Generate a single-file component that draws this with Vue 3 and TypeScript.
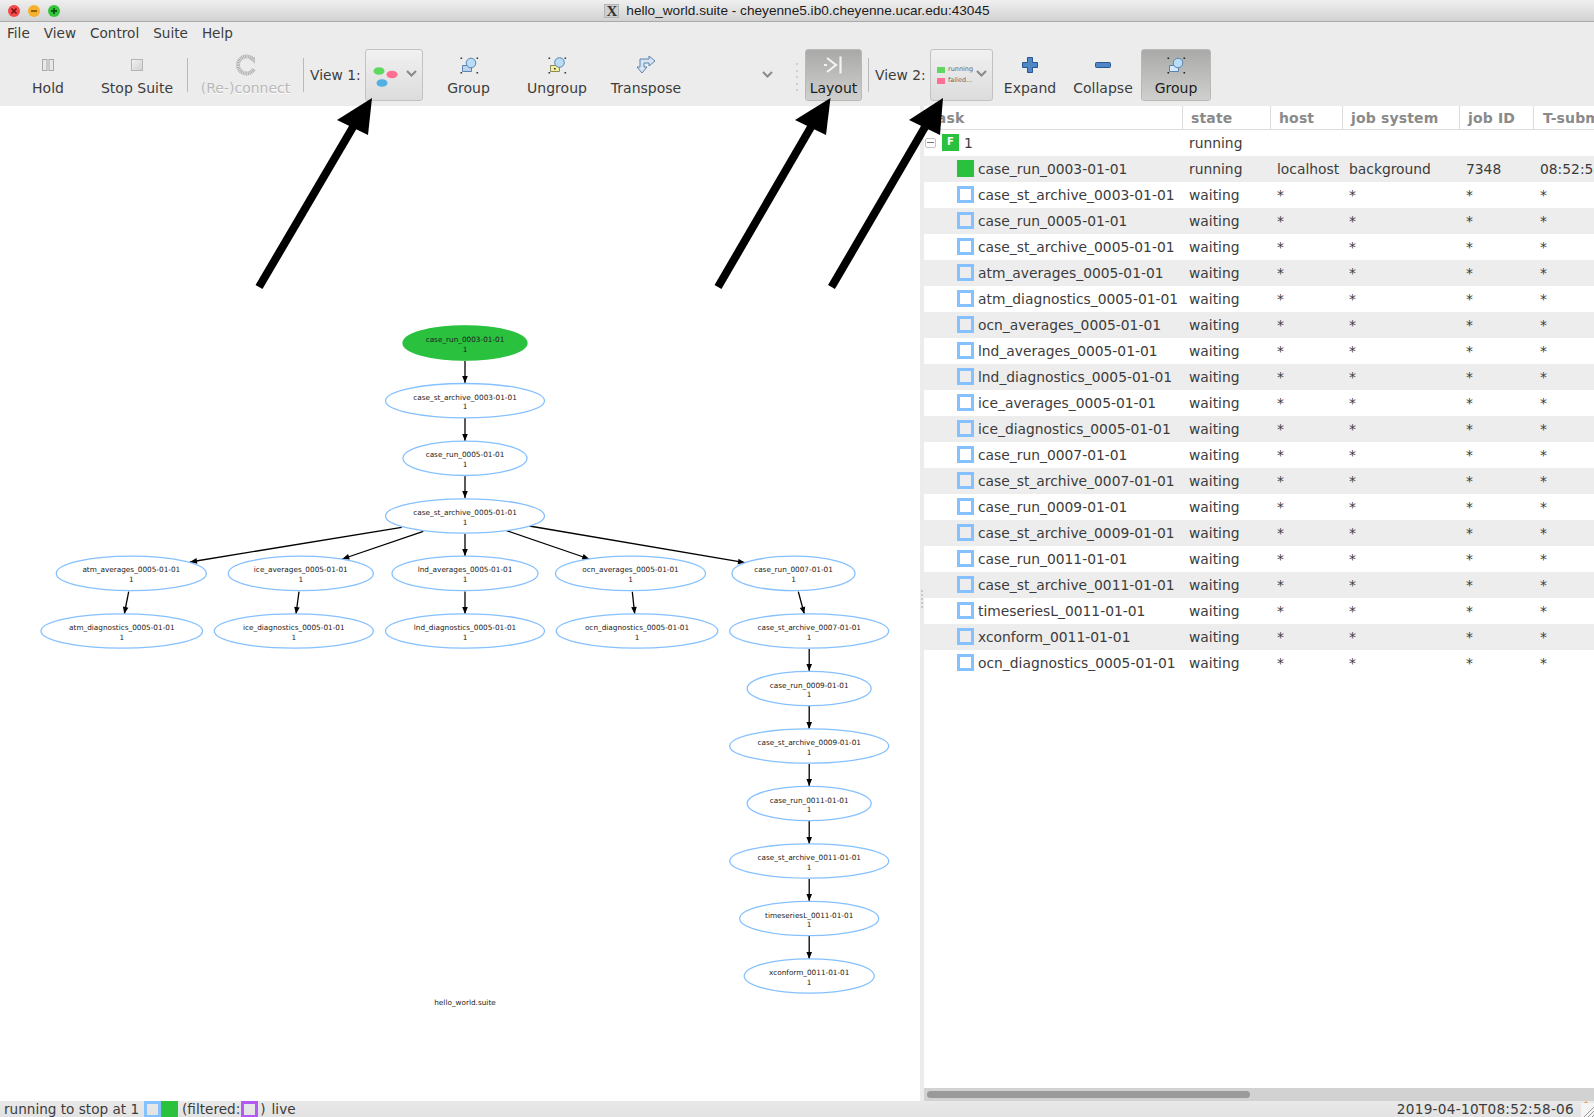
<template>
  <div class="window">
    <div class="titlebar">
      <div class="lights">
        <span class="light red"><svg width="8" height="8" viewBox="0 0 8 8"><path d="M1.5 1.5l5 5M6.5 1.5l-5 5" stroke="#7a1010" stroke-width="1.6" /></svg></span>
        <span class="light amber"><svg width="8" height="8" viewBox="0 0 8 8"><path d="M1 4h6" stroke="#8a5a08" stroke-width="1.8" /></svg></span>
        <span class="light green"><svg width="8" height="8" viewBox="0 0 8 8"><path d="M1 4h6M4 1v6" stroke="#0b5a12" stroke-width="1.8" /></svg></span>
      </div>
      <div class="title">
        <span class="x-logo">X</span>
        <span>hello_world.suite - cheyenne5.ib0.cheyenne.ucar.edu:43045</span>
      </div>
    </div>

    <div class="menubar">
      <span v-for="m in menus" :key="m">{{ m }}</span>
    </div>

    <div class="toolbar">
      <div class="tool w-hold">
        <svg class="ico" width="24" height="24" viewBox="0 0 24 24">
          <rect x="6.5" y="6.5" width="4.5" height="11" fill="#e8e8e8" stroke="#a9a9a9" />
          <rect x="13" y="6.5" width="4.5" height="11" fill="#e8e8e8" stroke="#a9a9a9" />
        </svg>
        <span>Hold</span>
      </div>
      <div class="tool w-stop">
        <svg class="ico" width="24" height="24" viewBox="0 0 24 24">
          <defs>
            <linearGradient id="stopfill" x1="0" y1="0" x2="1" y2="1">
              <stop offset="0" stop-color="#f4f4f4" />
              <stop offset="1" stop-color="#cfcfcf" />
            </linearGradient>
          </defs>
          <rect x="6.5" y="6.5" width="11" height="11" fill="url(#stopfill)" stroke="#b5b5b5" />
        </svg>
        <span>Stop Suite</span>
      </div>
      <i class="sep sep-a"></i>
      <div class="tool w-conn disabled">
        <svg class="ico" width="24" height="24" viewBox="0 0 24 24">
          <path d="M19 6.5 A8.5 8.5 0 1 0 20 16" fill="none" stroke="#adadad" stroke-width="4" stroke-dasharray="1 0.6" />
          <path d="M14 4h7v7z" fill="#c2c2c2" />
        </svg>
        <span>(Re-)connect</span>
      </div>
      <i class="sep"></i>
      <span class="view-label vl-one">View 1:</span>
      <div class="combo combo-one">
        <svg width="30" height="30" viewBox="0 0 30 30">
          <ellipse cx="9" cy="11" rx="5.5" ry="3.8" fill="#5fd85f" />
          <ellipse cx="22" cy="14.5" rx="5.5" ry="3.8" fill="#ff6f94" />
          <ellipse cx="12" cy="23" rx="5.5" ry="3.8" fill="#50b0e0" />
        </svg>
        <svg class="chev" width="11" height="7" viewBox="0 0 11 7"><path d="M1 1l4.5 4.5L10 1" fill="none" stroke="#8a8a8a" stroke-width="2" /></svg>
      </div>
      <div class="tool w-group">
        <svg class="ico" width="24" height="24" viewBox="0 0 24 24">
          <path d="M5.5 12.5h9v6h-9z" fill="#b9d4ee" stroke="#5b83ad" />
          <circle cx="14" cy="10" r="4.8" fill="#b9dcf7" stroke="#5b83ad" />
          <path d="M3.5 4.5h1.6v1.6H3.5zM19.5 4.5h1.6v1.6h-1.6zM3.5 19h1.6v1.6H3.5zM19.5 19h1.6v1.6h-1.6z" fill="#333" />
        </svg>
        <span>Group</span>
      </div>
      <div class="tool w-ungroup">
        <svg class="ico" width="24" height="24" viewBox="0 0 24 24">
          <path d="M5.5 12.5h9v6h-9z" fill="#f2ef9a" stroke="#8b8b5b" />
          <circle cx="14.5" cy="9.5" r="4.8" fill="#b9dcf7" stroke="#5b83ad" />
          <path d="M3.5 4.5h1.6v1.6H3.5zM19.5 4.5h1.6v1.6h-1.6zM3.5 19h1.6v1.6H3.5zM19.5 19h1.6v1.6h-1.6zM9 15h1.6v1.6H9z" fill="#333" />
        </svg>
        <span>Ungroup</span>
      </div>
      <div class="tool w-transpose">
        <svg class="ico" width="24" height="24" viewBox="0 0 24 24">
          <path d="M3 14h3V6h9V3l6 5-6 5v-3H10v4h3l-5 6z" fill="#d7e5f3" stroke="#5b83ad" stroke-linejoin="round" />
        </svg>
        <span>Transpose</span>
      </div>
      <svg class="more" width="11" height="7" viewBox="0 0 11 7"><path d="M1 1l4.5 4.5L10 1" fill="none" stroke="#8a8a8a" stroke-width="2" /></svg>
      <div class="grip"><i v-for="n in 5" :key="n"></i></div>
      <div class="tool toggled w-layout">
        <svg class="ico" width="24" height="24" viewBox="0 0 24 24">
          <path d="M5 5l9 7-9 7" fill="none" stroke="#f3f3f1" stroke-width="2.2" />
          <path d="M18.5 3.5v17" stroke="#f3f3f1" stroke-width="2.2" />
          <path d="M2 11h3v2H2z" fill="#f3f3f1" />
        </svg>
        <span>Layout</span>
      </div>
      <i class="sep sep-b"></i>
      <span class="view-label vl-two">View 2:</span>
      <div class="combo combo-two">
        <div class="legend">
          <div><b class="sw-run"></b>running</div>
          <div><b class="sw-fail"></b>failed...</div>
        </div>
        <svg class="chev" width="11" height="7" viewBox="0 0 11 7"><path d="M1 1l4.5 4.5L10 1" fill="none" stroke="#8a8a8a" stroke-width="2" /></svg>
      </div>
      <div class="tool w-expand">
        <svg class="ico" width="24" height="24" viewBox="0 0 24 24">
          <path d="M9.5 4.5h5v5h5v5h-5v5h-5v-5h-5v-5h5z" fill="#4f86c6" stroke="#2a5590" />
        </svg>
        <span>Expand</span>
      </div>
      <div class="tool w-collapse">
        <svg class="ico" width="24" height="24" viewBox="0 0 24 24">
          <rect x="4.5" y="9.5" width="15" height="5" rx="1" fill="#4f86c6" stroke="#2a5590" />
        </svg>
        <span>Collapse</span>
      </div>
      <div class="tool toggled w-group2">
        <svg class="ico" width="24" height="24" viewBox="0 0 24 24">
          <path d="M5.5 12.5h9v6h-9z" fill="#d4e8fa" stroke="#5b83ad" />
          <circle cx="14" cy="10" r="4.8" fill="#b9dcf7" stroke="#5b83ad" />
          <path d="M3.5 4.5h1.6v1.6H3.5zM19.5 4.5h1.6v1.6h-1.6zM3.5 19h1.6v1.6H3.5zM19.5 19h1.6v1.6h-1.6z" fill="#222" />
        </svg>
        <span>Group</span>
      </div>
    </div>

    <div class="panes">
      <div class="graph-pane">
        <svg class="graph" width="920" height="995" viewBox="0 106 920 995">
          <g v-for="(e, i) in edges" :key="'e' + i">
            <line :x1="e.x1" :y1="e.y1" :x2="e.x2" :y2="e.y2" stroke="#000" stroke-width="1.3" />
            <polygon :points="head(e)" fill="#000" />
          </g>
          <g v-for="n in nodes" :key="n.label">
            <ellipse :cx="n.x" :cy="n.y" :rx="n.rx" ry="17.2"
              :fill="n.running ? '#2ac13f' : '#fff'" :stroke="n.running ? '#2ac13f' : '#85c0ff'" stroke-width="1.3" />
            <text class="node-text" :x="n.x" :y="n.y - 1">{{ n.label }}</text>
            <text class="node-text" :x="n.x" :y="n.y + 8.5">1</text>
          </g>
          <text class="node-text" x="465" y="1005">hello_world.suite</text>
        </svg>
      </div>

      <div class="divider"><i v-for="n in 5" :key="n"></i></div>

      <div class="table-pane">
        <div class="thead">
          <div v-for="h in headers" :key="h">{{ h }}</div>
        </div>
        <div class="row">
          <div class="c-task group-cell">
            <span class="minus"></span>
            <span class="family">F</span>
            <span>1</span>
          </div>
          <div>running</div>
        </div>
        <div v-for="(t, i) in tasks" :key="t.name + i" class="row" :class="{ stripe: i % 2 === 0 }">
          <div class="c-task task-cell">
            <span class="state" :class="{ run: t.state === 'running' }"></span>
            <span>{{ t.name }}</span>
          </div>
          <div>{{ t.state }}</div>
          <div>{{ t.host }}</div>
          <div>{{ t.system }}</div>
          <div>{{ t.id }}</div>
          <div>{{ t.submit }}</div>
        </div>
        <div class="hscroll"><div class="thumb"></div></div>
      </div>
    </div>

    <div class="statusbar">
      <span>running to stop at 1</span>
      <span class="state st-first"></span>
      <span class="state run"></span>
      <span class="st-filter">(filtered:</span>
      <span class="state filtered"></span>
      <span class="st-close">)</span>
      <span class="st-live">live</span>
      <span class="st-time">2019-04-10T08:52:58-06</span>
      <svg class="resize" width="13" height="16" viewBox="0 0 13 16">
        <rect x="0" y="2" width="13" height="14" fill="#f4f4f4" />
        <path d="M3 16L13 6M7 16l6-6M11 16l2-2" stroke="#9a9a9a" fill="none" />
        <path d="M3 2l2-2 2 2z" fill="#f0a050" />
      </svg>
    </div>

    <svg class="callouts" width="1594" height="300" viewBox="0 0 1594 300">
      <g v-for="(a, i) in callouts" :key="i">
        <line :x1="a.tail[0]" :y1="a.tail[1]" :x2="a.neck[0]" :y2="a.neck[1]" stroke="#000" stroke-width="8" />
        <polygon :points="a.head" fill="#000" />
      </g>
    </svg>
  </div>
</template>

<script setup lang="ts">
interface Edge { x1: number; y1: number; x2: number; y2: number }
interface GraphNode { label: string; x: number; y: number; rx: number; running?: boolean }
interface Task { name: string; state: string; host: string; system: string; id: string; submit: string }

const menus = ['File', 'View', 'Control', 'Suite', 'Help']
const headers = ['task', 'state', 'host', 'job system', 'job ID', 'T-submit']

const cx = 465
const cr = 809.2
const nodes: GraphNode[] = [
  { label: 'case_run_0003-01-01', x: cx, y: 343, rx: 62, running: true },
  { label: 'case_st_archive_0003-01-01', x: cx, y: 400.7, rx: 79.5 },
  { label: 'case_run_0005-01-01', x: cx, y: 458.3, rx: 62 },
  { label: 'case_st_archive_0005-01-01', x: cx, y: 516, rx: 79.5 },
  { label: 'atm_averages_0005-01-01', x: 131.3, y: 573.4, rx: 75 },
  { label: 'ice_averages_0005-01-01', x: 300.8, y: 573.4, rx: 72.5 },
  { label: 'lnd_averages_0005-01-01', x: cx, y: 573.4, rx: 73 },
  { label: 'ocn_averages_0005-01-01', x: 630.5, y: 573.4, rx: 75 },
  { label: 'case_run_0007-01-01', x: 793.5, y: 573.4, rx: 61.5 },
  { label: 'atm_diagnostics_0005-01-01', x: 121.8, y: 631, rx: 80.8 },
  { label: 'ice_diagnostics_0005-01-01', x: 293.8, y: 631, rx: 79.5 },
  { label: 'lnd_diagnostics_0005-01-01', x: cx, y: 631, rx: 79.5 },
  { label: 'ocn_diagnostics_0005-01-01', x: 637, y: 631, rx: 80.8 },
  { label: 'case_st_archive_0007-01-01', x: cr, y: 631, rx: 79.5 },
  { label: 'case_run_0009-01-01', x: cr, y: 688.5, rx: 62 },
  { label: 'case_st_archive_0009-01-01', x: cr, y: 746, rx: 79.5 },
  { label: 'case_run_0011-01-01', x: cr, y: 803.5, rx: 62 },
  { label: 'case_st_archive_0011-01-01', x: cr, y: 861, rx: 79.5 },
  { label: 'timeseriesL_0011-01-01', x: cr, y: 918.5, rx: 69.5 },
  { label: 'xconform_0011-01-01', x: cr, y: 976, rx: 65 },
]

function vert(x: number, y1: number, y2: number): Edge {
  return { x1: x, y1, x2: x, y2 }
}

const edges: Edge[] = [
  vert(cx, 361, 383), vert(cx, 418, 441), vert(cx, 476, 498),
  { x1: 401.7, y1: 527.3, x2: 190, y2: 562 },
  { x1: 423.3, y1: 531.3, x2: 342.3, y2: 559 },
  vert(cx, 534, 556),
  { x1: 506.7, y1: 530.7, x2: 589.3, y2: 559 },
  { x1: 529.3, y1: 526, x2: 745, y2: 562.7 },
  { x1: 128.7, y1: 591.7, x2: 124.3, y2: 614 },
  { x1: 299, y1: 591.7, x2: 296, y2: 614 },
  vert(cx, 591.5, 614),
  { x1: 632.3, y1: 591.7, x2: 634.7, y2: 614 },
  { x1: 798.3, y1: 591.7, x2: 804.3, y2: 614 },
  vert(cr, 649, 671), vert(cr, 706, 729), vert(cr, 764, 786),
  vert(cr, 821, 844), vert(cr, 879, 901), vert(cr, 936, 959),
]

// arrowhead at the end of a graph edge
function head(e: Edge): string {
  const dx = e.x2 - e.x1
  const dy = e.y2 - e.y1
  const len = Math.hypot(dx, dy)
  const ux = dx / len
  const uy = dy / len
  const bx = e.x2 - ux * 7
  const by = e.y2 - uy * 7
  return `${e.x2},${e.y2} ${bx - uy * 2.8},${by + ux * 2.8} ${bx + uy * 2.8},${by - ux * 2.8}`
}

const callouts = [
  { tail: [259, 287], neck: [353, 127], head: '372,98 368,135 337,120' },
  { tail: [718, 287], neck: [811, 127], head: '830.5,98 826,135 795,120' },
  { tail: [831.5, 287], neck: [925, 127], head: '943,98 940,135 909,120' },
]

const waiting = [
  'case_st_archive_0003-01-01', 'case_run_0005-01-01', 'case_st_archive_0005-01-01',
  'atm_averages_0005-01-01', 'atm_diagnostics_0005-01-01', 'ocn_averages_0005-01-01',
  'lnd_averages_0005-01-01', 'lnd_diagnostics_0005-01-01', 'ice_averages_0005-01-01',
  'ice_diagnostics_0005-01-01', 'case_run_0007-01-01', 'case_st_archive_0007-01-01',
  'case_run_0009-01-01', 'case_st_archive_0009-01-01', 'case_run_0011-01-01',
  'case_st_archive_0011-01-01', 'timeseriesL_0011-01-01', 'xconform_0011-01-01',
  'ocn_diagnostics_0005-01-01',
]

const tasks: Task[] = [
  { name: 'case_run_0003-01-01', state: 'running', host: 'localhost', system: 'background', id: '7348', submit: '08:52:58' },
  ...waiting.map((name) => ({ name, state: 'waiting', host: '*', system: '*', id: '*', submit: '*' })),
]
</script>

<style>
html, body { margin: 0; overflow: hidden; background: #fff; }
</style>

<style scoped>
.window {
  position: relative;
  width: 1594px;
  height: 1117px;
  display: flex;
  flex-direction: column;
  overflow: hidden;
  font-family: "DejaVu Sans", sans-serif;
  font-size: 14px;
  color: #3c3c3c;
  background: #ececec;
}

.titlebar {
  height: 21px;
  flex: none;
  display: flex;
  align-items: center;
  justify-content: center;
  position: relative;
  background: linear-gradient(#efefef, #d2d2d2);
  border-bottom: 1px solid #a9a9a9;
}
.lights {
  position: absolute;
  left: 8px;
  top: 5px;
  display: flex;
  gap: 8px;
}
.light {
  width: 12px;
  height: 12px;
  border-radius: 50%;
  display: flex;
  align-items: center;
  justify-content: center;
}
.red { background: #f4494a; }
.amber { background: #f7b02d; }
.green { background: #31c43c; }
.title {
  display: flex;
  align-items: center;
  gap: 7px;
  font-family: "Liberation Sans", sans-serif;
  font-size: 13.65px;
  color: #1c1c1c;
}
.x-logo {
  width: 15px;
  height: 14px;
  background: #cfcfcf;
  border: 1px solid #b5b5b5;
  box-sizing: border-box;
  font: bold 15px/12px "Liberation Serif", serif;
  text-align: center;
  color: #333;
}

.menubar {
  height: 22px;
  flex: none;
  display: flex;
  align-items: center;
  gap: 14px;
  padding-left: 7px;
  font-size: 13.6px;
}

.toolbar {
  height: 62px;
  flex: none;
  box-sizing: border-box;
  padding: 5px 0 4px;
  display: flex;
  align-items: stretch;
}
.tool {
  height: 52px;
  box-sizing: border-box;
  flex: none;
  display: flex;
  flex-direction: column;
  align-items: center;
  padding-top: 4px;
  gap: 3px;
  white-space: nowrap;
}
.ico { flex: none; }
.w-hold { width: 96px; }
.w-stop { width: 82px; }
.w-conn { width: 115px; }
.w-group { width: 91px; }
.w-ungroup { width: 86px; }
.w-transpose { width: 92px; }
.w-layout { width: 57px; }
.w-expand { width: 74px; }
.w-collapse { width: 72px; }
.w-group2 { width: 70px; margin-left: 2px; }
.disabled { color: #b8b8b8; text-shadow: 0 1px 0 #fff; }
.toggled {
  background: linear-gradient(#a9aaa7, #d0d1cf);
  border: 1px solid #b9b9b9;
  border-radius: 3px;
  color: #1c1c1c;
  padding-top: 3px;
}

.sep {
  flex: none;
  width: 1px;
  height: 34px;
  margin-top: 9px;
  background: #b9b9b9;
}
.sep-a { margin-left: 9px; }
.sep-b { margin-left: 6px; }
.view-label { flex: none; line-height: 52px; font-size: 13.8px; }
.vl-one { margin-left: 6px; width: 55px; }
.vl-two { margin-left: 6px; width: 55px; }
.combo {
  flex: none;
  height: 52px;
  box-sizing: border-box;
  border: 1px solid #c2c2c2;
  border-radius: 3px;
  background: linear-gradient(#f1f1f1, #dcdcdc);
  position: relative;
  display: flex;
  align-items: center;
}
.combo-one { width: 58px; padding-left: 4px; }
.combo-two { width: 63px; padding-left: 6px; }
.chev { position: absolute; right: 5px; top: 20px; }
.legend { font-size: 6.5px; color: #666; line-height: 11px; }
.legend div { display: flex; align-items: center; gap: 3px; }
.legend b { width: 8px; height: 6px; display: block; }
.sw-run { background: #5fd85f; }
.sw-fail { background: #ff6f94; }
.more { flex: none; margin: 22px 0 0 70px; }
.grip {
  flex: none;
  width: 2px;
  margin: 14px 7px 0 23px;
  height: 28px;
  display: flex;
  flex-direction: column;
  justify-content: space-between;
}
.grip i { width: 2px; height: 2px; background: #cfcfcf; display: block; }

.panes {
  flex: 1;
  min-height: 0;
  display: flex;
}
.graph-pane {
  width: 920px;
  flex: none;
  background: #fff;
}
.graph { display: block; }
.node-text {
  font-size: 7.3px;
  fill: #222;
  text-anchor: middle;
}
.divider {
  width: 4px;
  flex: none;
  display: flex;
  flex-direction: column;
  gap: 2px;
  padding-top: 484px;
  box-sizing: border-box;
  align-items: center;
}
.divider i { width: 2px; height: 2px; background: #c8c8c8; display: block; }

.table-pane {
  flex: 1;
  min-width: 0;
  position: relative;
  background: #fff;
  overflow: hidden;
  font-size: 13.85px;
}
.thead, .row {
  display: grid;
  grid-template-columns: 259px 88px 72px 117px 74px 100px;
}
.thead {
  height: 24px;
  border-bottom: 1px solid #dcdcdc;
  box-sizing: border-box;
  font-weight: bold;
  color: #8a8a8a;
  font-size: 14px;
  line-height: 24px;
  letter-spacing: 0.15px;
}
.thead div {
  padding-left: 8px;
  border-right: 1px solid #dcdcdc;
  white-space: nowrap;
  overflow: hidden;
}
.thead div:first-child { padding-left: 6px; }
.thead div:last-child { padding-left: 9px; }
.row {
  height: 26px;
  line-height: 26px;
  white-space: nowrap;
}
.row > div { padding-left: 6px; overflow: hidden; }
.stripe { background: #ededed; }
.row > .c-task {
  padding-left: 0;
  display: flex;
  align-items: center;
}
.group-cell { gap: 5px; }
.minus {
  width: 11px;
  height: 10px;
  box-sizing: border-box;
  margin-left: 1px;
  margin-right: 1px;
  border: 1px solid #c4c4c4;
  border-radius: 2px;
  position: relative;
}
.minus::after {
  content: "";
  position: absolute;
  left: 1px;
  right: 1px;
  top: 3px;
  height: 1px;
  background: #777;
}
.family {
  width: 17px;
  height: 17px;
  margin-bottom: 1px;
  background: #2ac13f;
  color: #fff;
  font-weight: bold;
  font-size: 10px;
  line-height: 15px;
  text-align: center;
}
.task-cell { padding-left: 33px !important; gap: 4px; }
.task-cell .state { margin-bottom: 1px; }
.state {
  width: 17px;
  height: 17px;
  flex: none;
  box-sizing: border-box;
  border: 3px solid #85c0ff;
  display: block;
}
.state.run { background: #2ac13f; border-color: #2ac13f; }
.state.filtered { border-color: #b35af5; }

.hscroll {
  position: absolute;
  left: 0;
  right: 0;
  bottom: 0;
  height: 13px;
  background: #d2d2d2;
}
.thumb {
  position: absolute;
  left: 3px;
  top: 3px;
  width: 323px;
  height: 7px;
  border-radius: 4px;
  background: #9a9a9b;
}

.statusbar {
  height: 16px;
  flex: none;
  display: flex;
  align-items: center;
  padding-left: 4px;
  font-size: 13.6px;
  background: linear-gradient(#e9e9e9, #e2e2e2);
  white-space: nowrap;
  position: relative;
}
.st-first { margin-left: 5px; }
.st-filter { margin-left: 4px; margin-right: 1px; }
.st-close { margin-left: 2px; }
.st-live { margin-left: 6px; }
.st-time { margin-left: auto; margin-right: 20px; letter-spacing: 0.3px; }
.resize { position: absolute; right: 0; top: 0; }

.callouts {
  position: absolute;
  left: 0;
  top: 0;
  pointer-events: none;
}
</style>
